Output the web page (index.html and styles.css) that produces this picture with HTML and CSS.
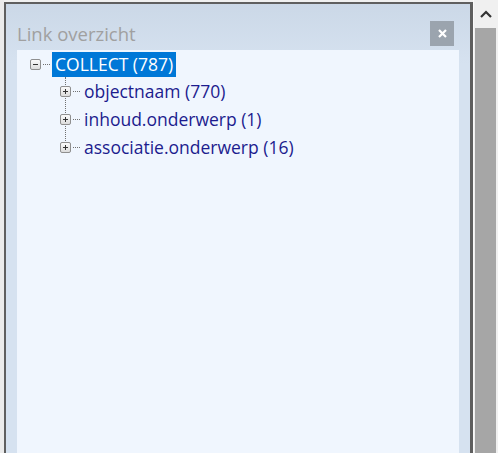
FILE: index.html
```html
<!DOCTYPE html>
<html>
<head>
<meta charset="utf-8">
<link rel="stylesheet" href="styles.css">
</head>
<body>
<div class="screen">
  <div class="edge"></div>
  <div class="panel">
    <div class="panel-head">
      <span class="title">Link overzicht</span>
      <span class="close"><svg width="9" height="9" viewBox="0 0 9 9"><path d="M1 1 L8 8 M8 1 L1 8" stroke="#fff" stroke-width="2.2"/></svg></span>
    </div>
    <div class="content">
      <ul class="tree">
        <li class="node root">
          <div class="row">
            <span class="toggle minus"></span><span class="dots"></span><span class="label selected">COLLECT (787)</span>
          </div>
          <ul class="children">
            <li class="node"><div class="row"><span class="toggle plus"></span><span class="dots"></span><span class="label">objectnaam (770)</span></div></li>
            <li class="node"><div class="row"><span class="toggle plus"></span><span class="dots"></span><span class="label">inhoud.onderwerp (1)</span></div></li>
            <li class="node last"><div class="row"><span class="toggle plus"></span><span class="dots"></span><span class="label">associatie.onderwerp (16)</span></div></li>
          </ul>
        </li>
      </ul>
    </div>
  </div>
  <div class="gap"></div>
  <div class="scrollbar">
    <div class="arrow"><svg width="12" height="8" viewBox="0 0 12 8"><path d="M1 7 L6 2 L11 7" fill="none" stroke="#333" stroke-width="2.2"/></svg></div>
    <div class="thumb"></div>
  </div>
</div>
</body>
</html>
```
FILE: styles.css
```css
html, body {
  margin: 0;
  padding: 0;
  width: 498px;
  height: 453px;
  overflow: hidden;
  background: #f0f0f0;
}
.screen {
  display: flex;
  height: 453px;
  font-family: "Open Sans", "Noto Sans", sans-serif;
}
.edge {
  width: 4px;
  background: #ebebeb;
}
.panel {
  width: 469px;
  box-sizing: border-box;
  border-left: 2px solid #5f5f5f;
  border-top: 2px solid #5f5f5f;
  border-right: 3px solid #5f5f5f;
  margin-top: 2px;
  background: linear-gradient(#cbd8e7, #d6e2f0 60px, #d6e2f0);
  padding: 0 11px 0 11px;
  display: flex;
  flex-direction: column;
}
.panel-head {
  height: 46px;
  display: flex;
  align-items: flex-start;
  justify-content: space-between;
}
.title {
  color: #a0a0a0;
  font-size: 18.5px;
  line-height: 24px;
  margin-top: 18px;
}
.close {
  margin-top: 17px;
  margin-right: 5px;
  width: 24px;
  height: 25px;
  background: #9ba4ae;
  display: flex;
  align-items: center;
  justify-content: center;
}
.content {
  flex: 1;
  background: #f0f6fe;
}
.tree, .children {
  list-style: none;
  margin: 0;
  padding: 0;
}
.tree {
  padding: 2px 0 0 13px;
}
.row {
  display: flex;
  align-items: center;
  height: 28px;
}
.root > .row { height: 25px; }
.children {
  margin-left: 30px;
  position: relative;
}
.children::before {
  content: "";
  position: absolute;
  left: 5px;
  top: 0;
  height: 70px;
  border-left: 1px dotted #707070;
}
.toggle {
  width: 11px;
  height: 11px;
  box-sizing: border-box;
  border: 1px solid #8f8f8f;
  border-radius: 2px;
  background: linear-gradient(#fafafa, #dcdcdc);
  position: relative;
  flex: none;
  z-index: 1;
}
.toggle::before {
  content: "";
  position: absolute;
  left: 2px;
  top: 4px;
  width: 5px;
  height: 1px;
  background: #333;
}
.plus::after {
  content: "";
  position: absolute;
  left: 4px;
  top: 2px;
  width: 1px;
  height: 5px;
  background: #333;
}
.dots {
  width: 7px;
  margin: 0 2px 0 2px;
  border-top: 1px dotted #707070;
  flex: none;
}
.label {
  font-size: 17.5px;
  color: #1c1c8e;
  padding: 0 2px;
  line-height: 25px;
}
.selected {
  background: #0078d7;
  color: #fff;
  padding: 0 3px 0 3px;
}
.gap {
  width: 1px;
  background: #fafafa;
}
.scrollbar {
  width: 24px;
  display: flex;
  flex-direction: column;
  background: #f0f0f0;
}
.arrow {
  height: 28px;
  display: flex;
  align-items: center;
  justify-content: center;
}
.thumb {
  flex: 1;
  background: #a6a6a6;
  margin: 0 2px 0 1px;
}
```
